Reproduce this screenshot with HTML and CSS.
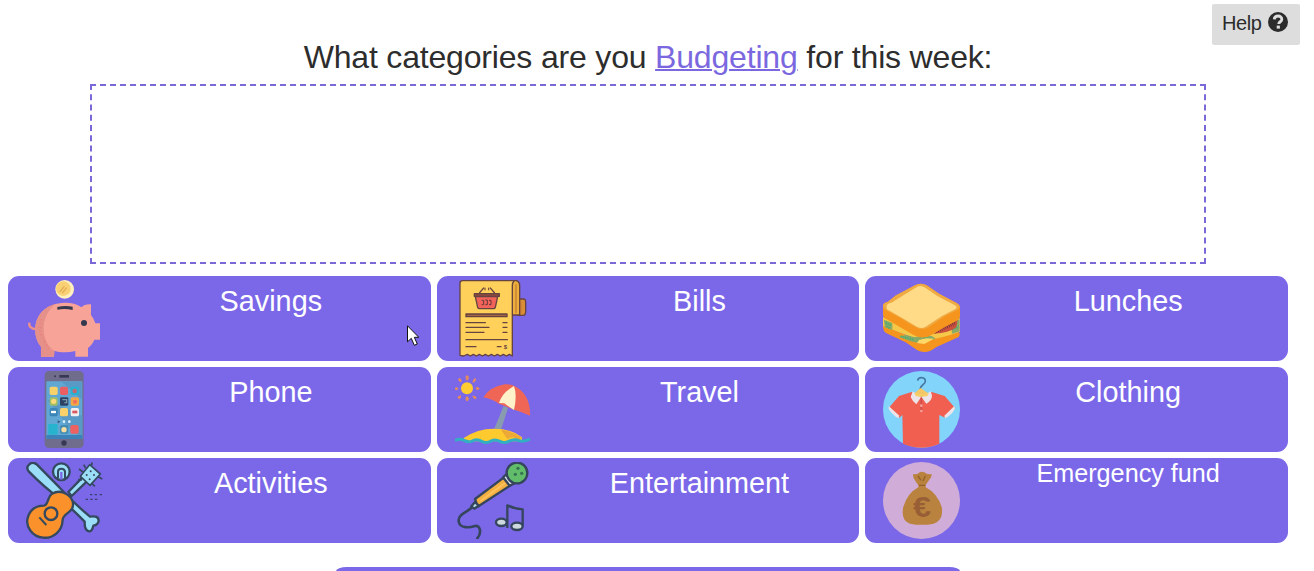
FILE: index.html
```html
<!DOCTYPE html>
<html lang="en">
<head>
<meta charset="utf-8">
<title>Weekly Budget</title>
<link rel="stylesheet" href="styles.css">
</head>
<body>
<button class="help"><span class="help-text">Help</span>
  <svg class="help-icon" viewBox="0 0 20 20"><circle cx="10" cy="10" r="10" fill="#2b2b2b"/><path d="M6.300 7.300C6.600 3 13.800 3 13.800 7.200c0 2.600-3 2.500-3 4.700" fill="none" stroke="#ddd" stroke-width="2.900"/><rect x="8.700" y="13.600" width="3.200" height="3" fill="#ddd"/></svg>
</button>
<main class="page">
  <h1 class="title">What categories are you <u class="term">Budgeting</u> for this week:</h1>
  <div class="dropzone"></div>
  <section class="cards">
    <div class="card">
      <svg class="icon" viewBox="78 30 231 231">
        <circle cx="194" cy="58" r="28" fill="#fff0bd"/><circle cx="190" cy="56" r="22" fill="#f9d174"/><path d="M179 66l14-17M187 69l13-16" stroke="#e5ae55" stroke-width="4"/>
        <path d="M88 158c-2 12 7 20 21 19" fill="none" stroke="#ed9089" stroke-width="7"/>
        <path d="M106 174c2-45 37-74 87-76 21 0 39 4 51 14 7-7 16-10 29-9v32c6 8 10 16 13 25h14v49h-17c-4 10-10 18-19 25v26h-38v-17c-22 5-44 5-64-1v18h-39v-30c-12-14-18-32-17-56z" fill="#f7a398"/>
        <path d="M106 174c2-38 27-64 61-73-48 39-47 111-3 143l-2 16h-39v-30c-12-14-18-32-17-56z" fill="#e6908a"/>
        <path d="M123 193l19 45M116 170l10 30M124 148l-3 32M134 211l12 25" stroke="#ee786d" stroke-width="3" stroke-dasharray="3 9"/>
        <path d="M172 119v-8q23-5 46-1v10q-23-5-46-1z" fill="#35394d"/><circle cx="252" cy="159" r="9" fill="#35394d"/>
      </svg>
      <span class="label">Savings</span>
    </div>
    <div class="card">
      <svg class="icon" viewBox="75 30 231 231">
        <g stroke="#654340" stroke-width="4" stroke-linejoin="round">
          <path d="M264 87h18q5 1 5 8v31q0 8-6 10h-17z" fill="#d98d35"/>
          <path d="M244 32q25-5 25 15v88h-22z" fill="#eeae3a"/>
          <path d="M98 32H253q-6 5-6 15V258L238 253 229 258 220 253 211 258 202 253 193 258 184 253 175 258 166 253 157 258 148 253 139 258 130 253 121 258 112 253 101 258 90 256V40q0-8 8-8z" fill="#ffd15b"/>
          <path d="M258 43v86M272 96v34" stroke="#b26e38" stroke-width="3"/>
          <path d="M136 80h67l-7 32q-1 4-6 4h-41q-5 0-6-4z" fill="#f26459"/>
          <path d="M133 71h75v8h-75z" fill="#8d493f"/>
          <path d="M148 69l14-16M194 69l-14-16" fill="none"/>
          <path d="M108 132h123v8H108z" fill="#a46447"/>
        </g>
        <path d="M155 91h6v13h-6M166 90h6v14h-6M177 91h6v13h-6M165 53v8M176 53v8" fill="none" stroke="#64383d" stroke-width="3"/>
        <path d="M108 158h58M108 172h69M108 187h54M108 209h124M108 230h30M219 158h12M219 172h12M219 187h12M202 230h11" stroke="#654340" stroke-width="4" stroke-linecap="round"/>
        <text class="receipt-mark" x="221" y="236">$</text>
      </svg>
      <span class="label">Bills</span>
    </div>
    <div class="card">
      <svg class="icon" viewBox="69 30 231 231">
        <path d="M69 166l107 45q12 8 23 0l98-25q5 8-1 15l-65 29-19 12q-21 9-40-1l-35-24-59-28q-10-7-9-23z" fill="#f6951d"/>
        <path d="M69 142l230 2v41q-52 19-101 26l-22-2-107-41z" fill="#f5c849"/>
        <path d="M72 149l25 10v21l-23-9zM116 200l22-5 26 7 23-7 30 4 10 7-47 14-29-6zM274 160l24-12v36l-22 7z" fill="#87aa67"/>
        <path d="M77 158l17 9M122 199l40 10M193 204l20 4M276 177l21-7M79 169l12 7" stroke="#49ad79" stroke-width="6" stroke-dasharray="4 3"/>
        <path d="M177 210l22-5 23 1-29 16-22-3z" fill="#ffd867"/>
        <path d="M217 190l76-40-4 22q-26 20-72 18z" fill="#cc503e"/><path d="M223 188l63-29" stroke="#60313a" stroke-width="9" stroke-dasharray="2 4"/>
        <path d="M69 108q0-10 15-13l22-18 59-31q17-10 35 0l37 25 54 29q10 6 9 14v23q0 10-11 15l-30 16-43 26q-28 17-57 0l-80-47q-12-4-10-18z" fill="#f6951d"/>
        <path d="M69 108q0-10 15-13l22-18 59-31q17-10 35 0l37 25 54 29q15 10 2 19l-39 20-47 32q-22 13-43-1l-43-26-42-23q-10-5-10-13z" fill="#efaa43"/>
        <path d="M80 107q2-7 14-9l75-46q13-8 27 1l36 25 53 28q10 6 0 12l-39 20-49 32q-14 8-29-1l-40-24-42-24q-8-4-6-14z" fill="#ffda87"/>
      </svg>
      <span class="label">Lunches</span>
    </div>
    <div class="card">
      <svg class="icon" viewBox="78 18 231 231">
        <rect x="134" y="18" width="117" height="231" rx="13" fill="#6f6d8b"/><path d="M139 49h108v173H139z" fill="#61a7d4"/><path d="M185 51h60v52zM139 102l108 51v66l-36-28z" fill="#5999c6"/><path d="M139 210h108v12H139z" fill="#3c82b8"/>
        <circle cx="165" cy="34" r="3" fill="#373853"/><path d="M178 34h29" stroke="#373853" stroke-width="8"/><circle cx="192" cy="234" r="8" fill="#373853"/>
        <g><rect x="149" y="65" width="24" height="25" rx="5" fill="#f8d16a"/><rect x="180" y="65" width="24" height="25" rx="5" fill="#e95f62"/><rect x="212" y="65" width="25" height="25" rx="5" fill="#27b3ce"/><circle cx="224" cy="78" r="7" fill="#bf6877"/><rect x="149" y="97" width="24" height="25" rx="5" fill="#9dbe68"/><circle cx="161" cy="109" r="8" fill="#f9d978"/><rect x="180" y="97" width="25" height="25" rx="4" fill="#2b4265"/><path d="M187 104h13v9h-7" fill="none" stroke="#7a99a7" stroke-width="4"/><rect x="212" y="97" width="25" height="25" rx="5" fill="#f2a747"/><circle cx="225" cy="110" r="6" fill="#f26e5f"/><rect x="149" y="129" width="24" height="25" rx="5" fill="#3a85b7"/><path d="M153 141h15" stroke="#fff" stroke-width="7"/><rect x="180" y="129" width="24" height="25" rx="5" fill="#f8d16a"/><rect x="212" y="129" width="25" height="25" rx="5" fill="#f1eff0"/><path d="M217 141h15" stroke="#dc565f" stroke-width="8"/><path d="M173 166l8 4-8 5z" fill="#315578"/><circle cx="192" cy="170" r="4" fill="#d9f2fa"/><circle cx="208" cy="170" r="4" fill="#d9f2fa"/><path d="M145 177h28v32h-28z" fill="#27b3ce"/><rect x="180" y="180" width="25" height="26" rx="5" fill="#438db5"/><circle cx="192" cy="194" r="8" fill="#f9dda0"/><rect x="211" y="180" width="25" height="26" rx="5" fill="#ec6260"/></g>
      </svg>
      <span class="label">Phone</span>
    </div>
    <div class="card">
      <svg class="icon" viewBox="75 18 231 231">
        <circle cx="111" cy="70" r="18" fill="#ffcc32"/><path fill="#e38a5e" d="M107 33l5-2 4 3v8l-5 5-4-5zM107 98l4-5 5 5v7l-4 4-5-3zM74 70l5-4 7 5-7 5-5-3zM136 70l7-5 6 6-6 5zM84 42l6-3 5 7-2 6-6-3zM128 48l6-9 5 4-5 9-6 1zM82 96l6-4 5-1v7l-6 5zM128 92l8 1 4 6-5 4-7-7z"/>
        <path d="M221 123l13 5-20 64-21-1z" fill="#899caf"/>
        <path d="M160 97q20-32 64-39 30-3 57 27 21 27 19 67-25-12-48-18l-45-18q-20-14-47-19z" fill="#ef6657"/><path d="M207 114q9-31 45-51 10 27 0 72l-18-12-11-8q-8-1-16-1z" fill="#fff1ca"/>
        <path d="M101 219q41-28 91-28 49-1 84 26v12H101z" fill="#ffca2d"/><path d="M213 194q31 2 63 25l-12 9-15-12-17 6z" fill="#eda936"/>
        <path d="M75 226q16-6 27 0t23 3q15-9 30 0 14 7 28-1 12-7 27 1 12 7 26 0 17-9 31-2 14 5 33-5" fill="none" stroke="#32afc2" stroke-width="9"/>
      </svg>
      <span class="label">Travel</span>
    </div>
    <div class="card">
      <svg class="icon" viewBox="69 18 231 231">
        <circle cx="184.500" cy="133.500" r="115.500" fill="#82d4fb"/>
        <path d="M173 47c2-13 23-12 23 2 0 11-13 8-15 22v5" fill="none" stroke="#477aa2" stroke-width="5"/>
        <path d="M161 86l21-17 25 17v8h-47z" fill="#f4c766"/>
        <path d="M127 150l-9 8-32-29 31-36 40-13 26 15 32-14 39 12 32 37-31 28-17-8v86q-53 24-109 0z" fill="#f15f50"/>
        <path d="M86 123l32 29-3 8q-17-9-29-28zM283 123l-30 29 2 8q20-10 30-29zM158 79l25 18-14 21q-11-8-17-22zM212 79l-28 17 15 20q17-8 17-25z" fill="#ece4e9"/>
        <path d="M163 84q20 8 44-1l-5 10q-18 5-35 0z" fill="#f7ce66"/><path d="M184 98v41" stroke="#cf4e4c" stroke-width="5"/><circle cx="184" cy="122" r="4" fill="#f3a096"/><circle cx="184" cy="138" r="4" fill="#f3a096"/>
      </svg>
      <span class="label">Clothing</span>
    </div>
    <div class="card">
      <svg class="icon" viewBox="78 18 231 231">
        <g stroke="#34495f" stroke-width="7" stroke-linejoin="round">
          <path d="M86 46q-9-12 2-21 11-10 23 1l68 69q44 48 91 87 26-5 26 13-2 12-16 14-4 17-12 17-15-1-14-29Q205 147 177 126 131 92 86 46z" fill="#9adff7"/>
          <path d="M205 108l48-50 13 13-51 49z" fill="#9adff7"/>
          <path d="M249 48l-12-9M257 36l-6-10M294 62l13 7M275 82l10 9M246 72l-12-1M275 28l1-9" stroke-width="5"/>
          <path d="M241 61l28-35 32 28-31 34z" fill="#9adff7" stroke-width="5"/>
          <path d="M156 113c31-17 65 9 63 35-1 23-29 23-31 43-1 34-28 57-59 54-32-3-53-33-46-59 6-22 21-37 49-37 13-1 10-26 24-36z" fill="#fb912b"/>
          <circle cx="153" cy="173" r="19" fill="none"/><path d="M118 184l21 23" stroke-width="6"/>
          <circle cx="184" cy="47" r="25" fill="#9adff7"/><path d="M174 66V47q0-9 10-9t11 9v19" fill="none" stroke-width="6"/><path d="M184 48v23" stroke="#7b68e9" stroke-width="7"/>
        </g>
        <g fill="#34495f"><circle cx="260" cy="57" r="3"/><circle cx="272" cy="46" r="3"/><circle cx="282" cy="57" r="3"/><circle cx="269" cy="70" r="3"/></g>
        <path d="M270 116h7M284 116h7M299 116h7M257 130h7M271 130h7M285 130h7" stroke="#34426d" stroke-width="4"/>
      </svg>
      <span class="label">Activities</span>
    </div>
    <div class="card">
      <svg class="icon" viewBox="75 18 231 231">
        <path d="M124 156c-17 14-40 20-38 39 2 25 36 19 49 15 17-3 20 22 7 37" fill="none" stroke="#35455d" stroke-width="8" stroke-linecap="round"/>
        <g stroke="#35455d" stroke-width="7" stroke-linejoin="round"><path d="M135 129l87-65 18 25-97 63z" fill="#f4af41"/><path d="M124 151l11-13 11 11-13 9z" fill="#b4d8df"/><path d="M219 64l11-10 22 29-13 6z" fill="#e5ebec"/><circle cx="261" cy="51" r="31" fill="#62bd6b"/><path d="M232 216v-68q23 11 46 12v50" fill="none"/><ellipse cx="214" cy="199" rx="16" ry="11" fill="#cdd9de"/><ellipse cx="261" cy="211" rx="17" ry="11" fill="#cdd9de"/></g>
        <path d="M151 135l74-54" stroke="#ffc25d" stroke-width="5"/><g fill="#357453"><circle cx="264" cy="37" r="5"/><circle cx="275" cy="52" r="5"/><circle cx="256" cy="55" r="5"/></g>
      </svg>
      <span class="label">Entertainment</span>
    </div>
    <div class="card">
      <svg class="icon" viewBox="69 18 231 231">
        <circle cx="184.500" cy="133.500" r="115.500" fill="#d0add8"/><path d="M159 54q13 3 20-5 7-3 14 0 9 8 22 5 1 9-7 17l-11 16v7q35 18 48 59 7 40-24 50-36 7-71 0-29-11-20-51 13-41 45-58v-6l-9-13q-8-10-7-21z" fill="#b9833f"/><path d="M177 88h19M174 60l9 13M196 59l-7 16" stroke="#956129" stroke-width="4"/><text class="euro" x="159" y="184" textLength="54" lengthAdjust="spacingAndGlyphs">€</text>
      </svg>
      <span class="label label-small">Emergency fund</span>
    </div>
  </section>
  <div class="submit"></div>
</main>
<svg class="cursor" viewBox="0 0 12 21"><path d="M.500.800v16l3.800-3.500 3 7 3-1.300-3-6.700h4.500z" fill="#fff" stroke="#111"/></svg>
</body>
</html>
```
FILE: styles.css
```css
* { box-sizing: border-box; }
body { margin: 0; width: 1296px; height: 571px; overflow: hidden; background: #fff; font-family: "Liberation Sans", Arial, sans-serif; color: #2d2d2d; }
.page { height: 571px; padding: 36px 8px 0; overflow: hidden; }
.title { margin: 0; height: 48px; font-size: 32px; line-height: 42px; font-weight: 400; letter-spacing: -0.18px; text-align: center; white-space: nowrap; }
.term { color: #7b68e0; text-decoration-thickness: 2px; }
.dropzone { width: 1116px; height: 180px; margin: 0 auto 12px; border: 2px dashed #7b68d8; }
.cards { display: grid; grid-template-columns: repeat(3, 1fr); grid-auto-rows: 85px; gap: 6px; }
.card { display: flex; padding: 4px 0 4px 18px; border-radius: 11px; background: #7b68e9; color: #fff; }
.icon { flex: none; width: 77px; height: 77px; margin-right: 8px; }
.label { flex: 1; text-align: center; font-size: 28.8px; line-height: 42px; }
.label-small { font-size: 25.2px; line-height: 22px; }
.submit { width: 624px; height: 4px; margin: 24px auto 0; border-radius: 11px 11px 0 0 / 4px 4px 0 0; background: #7b68e9; }
.help { position: absolute; top: 4px; left: 1212px; display: flex; align-items: center; gap: 6px; width: 88px; height: 41px; padding: 0 10px; border: 0; border-radius: 2px; background: #ddd; color: #2b2b2b; font: 20px/38px "Liberation Sans", Arial, sans-serif; }
.help-text { height: 41px; letter-spacing: -0.4px; }
.help-icon { flex: none; width: 20px; height: 20px; margin-top: -5px; }
.cursor { position: absolute; left: 407px; top: 325px; width: 12px; height: 21px; }
.receipt-mark { font: bold 18px "Liberation Sans", sans-serif; fill: #654340; }
.euro { font: bold 88px "Liberation Sans", sans-serif; fill: #985e36; }
```
